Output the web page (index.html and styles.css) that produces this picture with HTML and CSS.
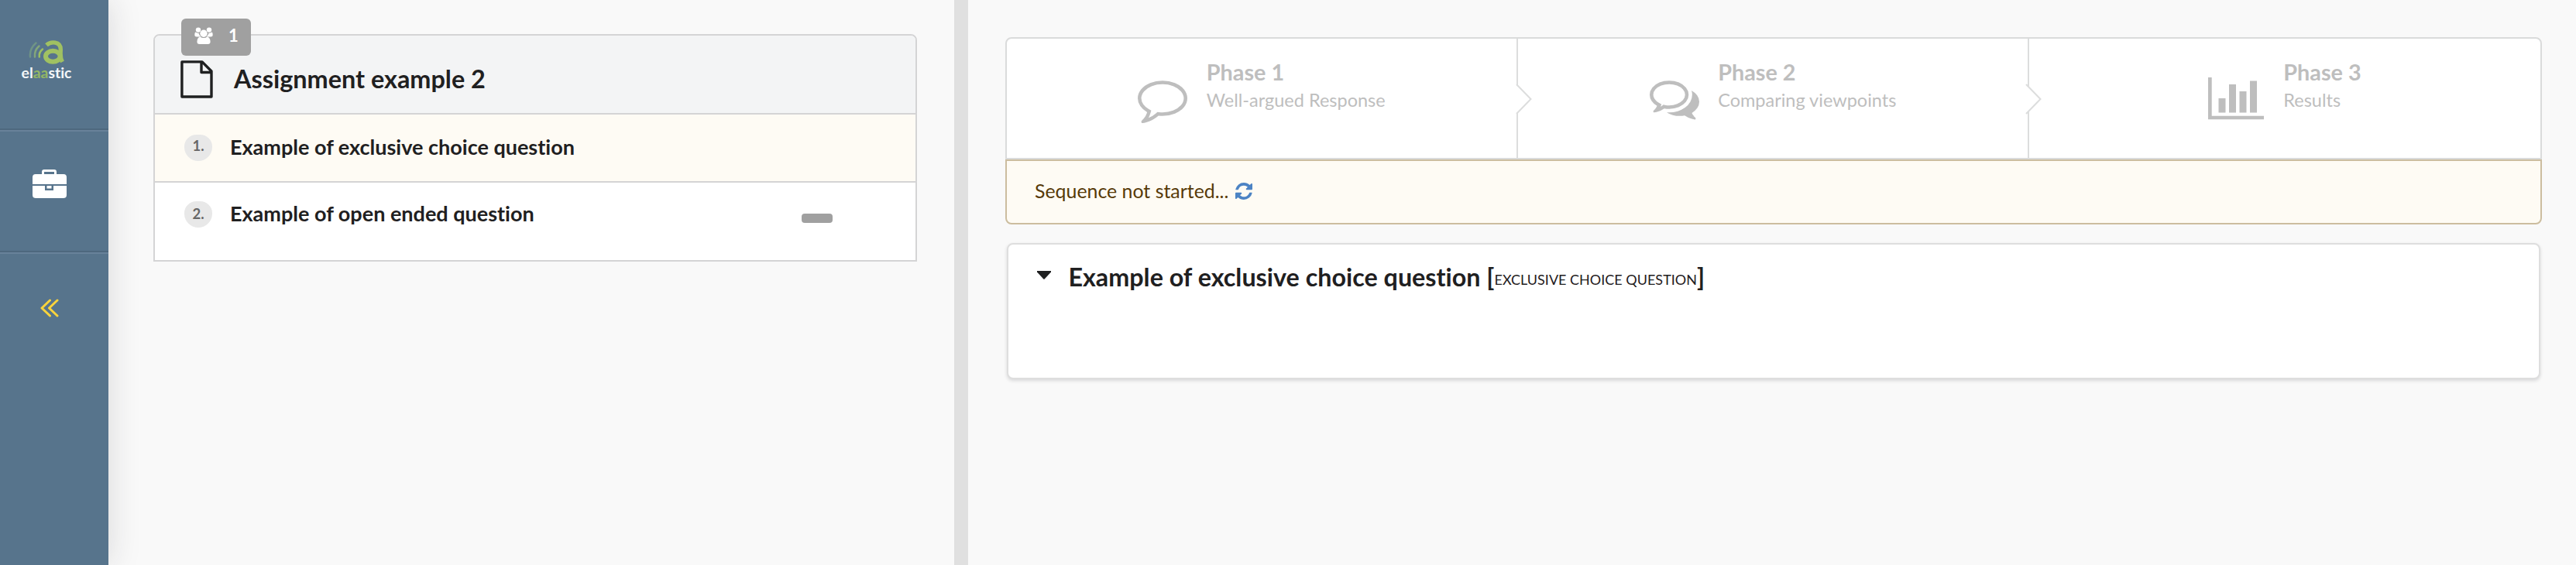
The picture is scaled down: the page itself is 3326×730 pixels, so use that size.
FILE: index.html
```html
<!DOCTYPE html>
<html lang="en">
<head>
<meta charset="utf-8">
<title>elaastic</title>
<link rel="stylesheet" href="styles.css">
</head>
<body>
<nav class="sidebar">
  <a class="nav-item nav-logo">
    <svg class="logo-mark" viewBox="0 0 46 31" width="46" height="31" fill="none">
      <g stroke-width="2.500" stroke-linecap="round">
        <path d="M9.500 3.500Q.8 11 2 21.500" stroke="#6f9486"/>
        <path d="M13.500 7.500Q7 13 8 21.500" stroke="#83a67a"/>
        <path d="M18 11.500Q13 15.500 13.800 21.500" stroke="#9cbf62"/>
      </g>
      <path d="M23 6.200C28.500 1.300 41.300.8 41.300 12C41.300 17.500 40 22 43.500 28" stroke="#a0c162" stroke-width="5.400"/>
      <ellipse cx="31.300" cy="20.800" rx="9.300" ry="7" stroke="#a0c162" stroke-width="6"/>
    </svg>
    <span class="logo-text">el<span class="logo-accent">aa</span>stic</span>
  </a>
  <a class="nav-item nav-case">
    <svg viewBox="0 0 44 38" width="44" height="38">
      <path d="M12 7V3a3 3 0 0 1 3-3h13a3 3 0 0 1 3 3v4h-3V3H15v4z" fill="#fff"/>
      <path d="M4 6h36a4 4 0 0 1 4 4v9H0v-9a4 4 0 0 1 4-4zM0 21h16v6h11v-6h17v12a4 4 0 0 1-4 4H4a4 4 0 0 1-4-4zM18.500 21h6v3.500h-6z" fill="#fff"/>
    </svg>
  </a>
  <a class="nav-item nav-collapse">
    <svg viewBox="0 0 24 24" width="24" height="24" fill="none" stroke="#fbd43b" stroke-width="3" stroke-linecap="round" stroke-linejoin="round"><path d="M12.500 2L2 12L12.500 22M22 2L11.500 12L22 22"/></svg>
  </a>
</nav>
<aside class="assignment-pane">
  <section class="assignment">
    <header class="assignment-head">
      <div class="badge">
        <svg viewBox="0 0 24 22" width="24" height="22" fill="#fff">
          <circle cx="5" cy="3.600" r="3.200"/><circle cx="19" cy="3.600" r="3.200"/>
          <path d="M1.300 6.600Q3 7.800 5.400 7.600Q6 11 8.500 12.500H3Q.3 12.500.3 10Q.3 7.500 1.300 6.600zM22.700 6.600Q21 7.800 18.600 7.600Q18 11 15.500 12.500H21Q23.700 12.500 23.700 10Q23.700 7.500 22.700 6.600z"/>
          <circle cx="12" cy="8.300" r="4.700"/>
          <path d="M7.500 12.500Q9.500 14 12 14T16.500 12.500Q20.600 13.500 20.600 19Q20.600 22 17.500 22H6.500Q3.400 22 3.400 19Q3.400 13.500 7.500 12.500z"/>
        </svg>
        <span>1</span>
      </div>
      <svg class="file-icon" viewBox="0 0 42 49" width="42" height="49" fill="none" stroke="#1f2021" stroke-width="3.400" stroke-linejoin="round"><path d="M1.900 1.900H28L40 14V47H1.900zM27 1.900V15.500H40"/></svg>
      <h1>Assignment example 2</h1>
    </header>
    <div class="question active"><span class="num">1.</span><span class="question-title">Example of exclusive choice question</span></div>
    <div class="question last"><span class="num">2.</span><span class="question-title">Example of open ended question</span><span class="pill"></span></div>
  </section>
</aside>
<div class="divider"></div>
<main class="content">
  <div class="steps">
    <div class="step">
      <svg class="ico" viewBox="0 0 1792 1792" width="64" height="64" fill="#bebebe"><path d="M896 384q-204 0-381.500 69.500T232.500 641 128 896q0 112 71.500 213.500T401 1285l87 50-27 96q-24 91-70 172 152-63 275-171l43-38 57 6q69 8 130 8 204 0 381.500-69.500t282-187.500T1664 896t-104.500-255-282-187.500T896 384zm896 512q0 174-120 321.500t-326 233-450 85.500q-70 0-145-8-198 175-460 242-49 14-114 22h-5q-15 0-27-10.500t-16-27.500v-1q-3-4-.5-12t2-10 4.500-9.500l6-9 7-8.500 8-9q7-8 31-34.500t34.500-38 31-39.500 32.500-51 27-59 26-76q-157-89-247.500-220T0 896q0-174 120-321.500t326-233T896 256t450 85.500 326 233T1792 896z"/></svg>
      <div class="step-text"><div class="step-title">Phase 1</div><div class="step-desc">Well-argued Response</div></div>
    </div>
    <div class="step">
      <svg class="arrow" viewBox="0 0 22 40" width="22" height="40"><path d="M1 1L19.500 20L1 39" fill="#fff" stroke="#dcdddd" stroke-width="2"/></svg>
      <svg class="ico" viewBox="0 0 1792 1792" width="64" height="64" fill="#bebebe"><path d="M704 384q-153 0-286 52T206.500 577 128 768q0 82 53 158t149 132l97 56-35 84q34-20 62-39l44-31 53 10q78 14 153 14 153 0 286-52t211.500-141T1280 768t-78.500-191T990 436t-286-52zm0-128q191 0 353.500 68.500t256.500 186.500 94 257-94 257-256.500 186.500T704 1280q-86 0-176-16-124 88-278 128-36 9-86 16h-3q-11 0-20.500-8t-11.500-21q-1-3-1-6.500t.5-6.500 2-6l2.500-5 3.500-5.500 4-5 4.500-5 4-4.500q5-6 23-25t26-29.500 22.500-29 25-38.500 20.500-44q-124-72-195-177T0 768q0-139 94-257t256.500-186.500T704 256zm822 1169q10 24 20.500 44t25 38.500 22.500 29 26 29.500 23 25q1 1 4 4.500t4.500 5 4 5 3.500 5.500l2.500 5 2 6 .5 6.500-1 6.500q-3 14-13 22t-22 7q-50-7-86-16-154-40-278-128-90 16-176 16-271 0-472-132 58 4 88 4 161 0 309-45t264-129q125-92 192-212t67-254q0-77-23-152 129 71 204 178t75 230q0 120-71 224.500T1526 1425z"/></svg>
      <div class="step-text"><div class="step-title">Phase 2</div><div class="step-desc">Comparing viewpoints</div></div>
    </div>
    <div class="step">
      <svg class="arrow arrow-last" viewBox="0 0 22 40" width="22" height="40"><path d="M1 1L19.500 20L1 39" fill="#fff" stroke="#dcdddd" stroke-width="2"/></svg>
      <svg class="chart" viewBox="0 0 73 55" width="73" height="55" fill="#bebebe"><path d="M0 0H4.700V49.700H72V54.300H0zM13.500 27H22.500V45.500H13.500zM27 9H36V45.500H27zM40.500 18H49.500V45.500H40.500zM54 4.500H63V45.500H54z"/></svg>
      <div class="step-text"><div class="step-title">Phase 3</div><div class="step-desc">Results</div></div>
    </div>
  </div>
  <div class="message">
    <span>Sequence not started...</span>
    <svg viewBox="128 128 1536 1536" width="22" height="22" fill="#4c83c4"><path d="M1639 1056q0 5-1 7-64 268-268 434.500T892 1664q-146 0-282.500-55T366 1452l-129 129q-19 19-45 19t-45-19-19-45v-448q0-26 19-45t45-19h448q26 0 45 19t19 45-19 45l-137 137q71 66 161 102t187 36q134 0 250-65t186-179q11-17 53-117 8-23 30-23h192q13 0 22.500 9.500t9.500 22.500zm25-800v448q0 26-19 45t-45 19h-448q-26 0-45-19t-19-45 19-45l138-138Q1097 384 896 384q-134 0-250 65T460 628q-11 17-53 117-8 23-30 23H178q-13 0-22.500-9.500T146 736v-7q65-268 270-434.500T896 128q146 0 284 55.500T1425 340l130-129q19-19 45-19t45 19 19 45z"/></svg>
  </div>
  <section class="detail">
    <svg class="caret" viewBox="0 0 18 11" width="18" height="11"><path d="M0 0H18V1.500L9.700 10.500Q9 11 8.300 10.500L0 1.500z" fill="#1f2021"/></svg>
    <h2>Example of exclusive choice question [<small>EXCLUSIVE CHOICE QUESTION</small>]</h2>
  </section>
</main>
</body>
</html>
```
FILE: styles.css
```css
* { box-sizing: border-box; }
body {
  margin: 0;
  height: 730px;
  display: flex;
  overflow: hidden;
  background: #f9f9f9;
  color: #1f2021;
  font-family: Lato, "Liberation Sans", sans-serif;
  font-size: 27px;
  font-variant-ligatures: none;
}
svg { display: block; flex: none; }
h1, h2 { margin: 0; font-weight: 700; }

.sidebar {
  position: relative;
  z-index: 1;
  width: 140px;
  flex: none;
  background: #57748c;
  box-shadow: 0 0 40px rgba(34, 36, 38, .15);
}
.nav-item { display: flex; flex-direction: column; align-items: center; }
.nav-logo { height: 168px; padding: 52px 20px 0 0; border-bottom: 2px solid #4e687e; }
.logo-text { color: #f4f7f9; font-size: 19.4px; font-weight: 700; line-height: 22px; }
.logo-accent { color: #93b765; }
.nav-case { height: 158px; padding: 49px 12px 0 0; border-top: 2px solid #68829a; border-bottom: 2px solid #4e687e; }
.nav-collapse { padding: 58px 12px 0 0; border-top: 2px solid #68829a; }

.assignment-pane { width: 1092px; flex: none; padding: 44px 48px 0 58px; }
.assignment { border: 2px solid #d4d4d5; border-radius: 8px 8px 0 0; background: #fff; }
.assignment-head {
  position: relative;
  height: 102px;
  display: flex;
  padding: 32px 33px 0;
  background: #f3f4f5;
  border-bottom: 2px solid #d4d4d5;
  border-radius: 6px 6px 0 0;
}
.badge {
  position: absolute;
  left: 34px;
  top: -22px;
  width: 90px;
  height: 48px;
  display: flex;
  align-items: flex-start;
  padding: 11px 17px;
  gap: 20px;
  border-radius: 6px;
  background: #a0a0a0;
  color: #fff;
  font-size: 22px;
  font-weight: 700;
  line-height: 21px;
}
.assignment-head h1 { margin: 4px 0 0 27px; font-size: 32.4px; line-height: 39px; white-space: nowrap; }
.question { height: 88px; display: flex; padding: 26px 38px 0; border-bottom: 2px solid #d4d4d5; }
.question.active { background: #fefbf4; }
.question.last { height: 100px; border-bottom: 0; padding-top: 24px; }
.num {
  width: 36px;
  height: 34px;
  border-radius: 16px 16px 18px 18px / 15px 15px 18px 18px;
  background: #e8e8e8;
  color: #666;
  font-size: 18.5px;
  font-weight: 700;
  line-height: 29px;
  text-align: center;
}
.last .num { line-height: 33px; }
.question-title { margin: -2px 0 0 23px; font-weight: 700; line-height: 35px; white-space: nowrap; }
.pill { width: 40px; height: 12px; border-radius: 4px; background: #a0a0a0; margin: 16px 69px 0 auto; }

.divider { width: 18px; flex: none; background: #e0e0e0; }

.content { flex: 1; padding: 48px 44px 0 48px; }
.steps {
  height: 158px;
  display: grid;
  grid-template-columns: repeat(3, 1fr);
  border: 2px solid #dadbdb;
  border-radius: 8px 8px 0 0;
  background: #fff;
  color: #bebebe;
}
.step { position: relative; display: flex; justify-content: center; padding-top: 26px; border-right: 2px solid #dcdddd; }
.step:last-child { border-right: 0; }
.arrow { position: absolute; left: -3px; top: 58px; }
.arrow-last { left: -5px; }
.ico { margin: 19px 24.5px 0 0; }
.chart { margin: 24px 24px 0 0; }
.step-title { font-size: 28.8px; font-weight: 700; line-height: 34px; }
.step-desc { font-size: 23.5px; line-height: 38px; }
.message {
  height: 84px;
  display: flex;
  padding: 22px 36px;
  gap: 9px;
  border: 2px solid #ccbd9f;
  border-radius: 0 0 8px 8px;
  background: #fefbf4;
  color: #573a08;
  font-size: 24.9px;
  line-height: 32px;
}
.message svg { margin-top: 6px; }
.detail {
  height: 176px;
  margin: 24px 2px 0;
  display: flex;
  padding: 22px 35px;
  border: 2px solid #dedede;
  border-radius: 8px;
  background: #fff;
  box-shadow: 0 2px 4px rgba(34, 36, 38, .15);
}
.caret { margin: 12px 22.4px 0 2px; }
.detail h2 { font-size: 32.3px; line-height: 39px; white-space: nowrap; }
.detail small { font-size: 18px; font-weight: 400; line-height: 1; vertical-align: 2px; }
```
